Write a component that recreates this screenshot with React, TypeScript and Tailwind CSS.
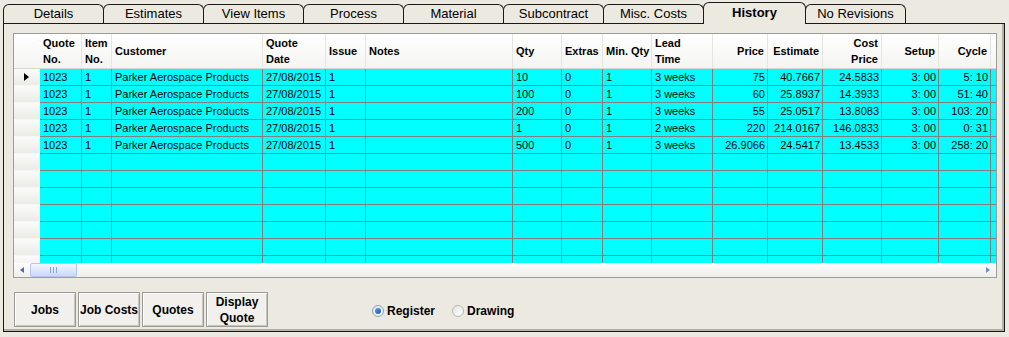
import React from "react";

type Col = { head: string[]; w: string; right?: boolean };

const cols: Col[] = [
  { head: ["Quote", "No."], w: "w-[42px]" },
  { head: ["Item", "No."], w: "w-[30px]" },
  { head: ["Customer"], w: "w-[151px]" },
  { head: ["Quote", "Date"], w: "w-[63px]" },
  { head: ["Issue"], w: "w-[40px]" },
  { head: ["Notes"], w: "w-[147px]" },
  { head: ["Qty"], w: "w-[49px]" },
  { head: ["Extras"], w: "w-[41px]" },
  { head: ["Min. Qty"], w: "w-[49px]" },
  { head: ["Lead", "Time"], w: "w-[61px]" },
  { head: ["Price"], w: "w-[55px]", right: true },
  { head: ["Estimate"], w: "w-[55px]", right: true },
  { head: ["Cost", "Price"], w: "w-[59px]", right: true },
  { head: ["Setup"], w: "w-[57px]", right: true },
  { head: ["Cycle"], w: "w-[52px]", right: true },
];

const base = ["1023", "1", "Parker Aerospace Products", "27/08/2015", "1", ""];
const rows: string[][] = [
  [...base, "10", "0", "1", "3 weeks", "75", "40.7667", "24.5833", "3: 00", "5: 10"],
  [...base, "100", "0", "1", "3 weeks", "60", "25.8937", "14.3933", "3: 00", "51: 40"],
  [...base, "200", "0", "1", "3 weeks", "55", "25.0517", "13.8083", "3: 00", "103: 20"],
  [...base, "1", "0", "1", "2 weeks", "220", "214.0167", "146.0833", "3: 00", "0: 31"],
  [...base, "500", "0", "1", "3 weeks", "26.9066", "24.5417", "13.4533", "3: 00", "258: 20"],
];

const tabs = ["Details", "Estimates", "View Items", "Process", "Material", "Subcontract", "Misc. Costs", "History", "No Revisions"];

function Tabs() {
  return (
    <div className="flex items-end h-[23px] pl-[3px]">
      {tabs.map((t, i) =>
        t === "History" ? (
          <div
            key={t}
            className="relative z-10 -ml-px mb-[-1px] h-[22px] w-[103px] border border-b-0 border-[#1a1a1a] rounded-t-[6px] bg-[#ece9e0] flex items-center justify-center pb-[1px] text-[13px] font-bold text-black"
          >
            {t}
          </div>
        ) : (
          <div
            key={t}
            className={`${i === 0 ? "" : "-ml-px"} h-[19px] w-[101px] border border-b-0 border-[#1a1a1a] rounded-t-[6px] bg-[#ece9e0] flex items-center justify-center text-[13px] text-black`}
          >
            {t}
          </div>
        )
      )}
    </div>
  );
}

function GridHeader() {
  return (
    <div className="flex h-[35px] bg-gradient-to-b from-white to-[#f4f4f2] border-b border-[#d6d6d2]">
      <div className="w-[26px]" />
      {cols.map((c) => (
        <div
          key={c.head.join(" ")}
          className={`${c.w} shrink-0 border-r border-[#e4e4e0] flex flex-col justify-center text-[11px] font-bold leading-[16px] text-black ${
            c.right ? "items-end pr-[3px]" : "items-start pl-[3px]"
          }`}
        >
          {c.head.map((h) => (
            <span key={h} className="whitespace-nowrap">
              {h}
            </span>
          ))}
        </div>
      ))}
      <div className="flex-1" />
    </div>
  );
}

function GridRow({ cells, current }: { cells?: string[]; current?: boolean }) {
  return (
    <div className="flex h-[17px] shrink-0">
      <div className="w-[26px] shrink-0 flex items-center bg-gradient-to-b from-[#fbfbfa] to-[#ebebe7] border-b border-[#f7f7f5]">
        {current && (
          <span className="ml-[10px] w-0 h-0 border-y-[4px] border-y-transparent border-l-[5px] border-l-black" />
        )}
      </div>
      {cols.map((c, i) => (
        <div
          key={i}
          className={`${c.w} shrink-0 bg-[#00ffff] border-r border-b border-[#808080] flex items-center text-[11px] text-black whitespace-nowrap overflow-hidden ${
            c.right ? "justify-end pr-[2px]" : "pl-[3px]"
          }`}
        >
          {cells ? cells[i] : ""}
        </div>
      ))}
      <div className="flex-1 bg-[#00ffff] border-b border-[#808080]" />
    </div>
  );
}

function ScrollBar() {
  return (
    <div className="h-[14px] flex items-center bg-gradient-to-b from-[#fdfdfc] to-[#eeeeea]">
      <span className="ml-[6px] w-0 h-0 border-y-[3px] border-y-transparent border-r-[4px] border-r-[#4a6cae]" />
      <div className="ml-[6px] h-[14px] w-[47px] rounded-[2px] border border-[#b4c7ec] bg-gradient-to-b from-[#f4f7fe] to-[#c9d8f6] flex items-center justify-center gap-[2px]">
        <span className="w-px h-[6px] bg-[#8aa4d6]" />
        <span className="w-px h-[6px] bg-[#8aa4d6]" />
        <span className="w-px h-[6px] bg-[#8aa4d6]" />
      </div>
      <div className="flex-1" />
      <span className="mr-[6px] w-0 h-0 border-y-[3px] border-y-transparent border-l-[4px] border-l-[#6d8fd0]" />
    </div>
  );
}

function Button({ lines }: { lines: string[] }) {
  return (
    <button className="w-[62px] h-[35px] border border-[#9a9a98] bg-[#f1f0ec] shadow-[inset_1px_1px_0_#ffffff,inset_-1px_-1px_0_#c6c5bf] flex flex-col items-center justify-center text-[12px] font-bold leading-[16px] text-black">
      {lines.map((l) => (
        <span key={l} className="whitespace-nowrap">
          {l}
        </span>
      ))}
    </button>
  );
}

function Radio({ label, checked }: { label: string; checked?: boolean }) {
  return (
    <label className="flex items-center gap-[3px] text-[12px] font-bold text-black">
      <span
        className={`w-[12px] h-[12px] rounded-full border flex items-center justify-center bg-gradient-to-br from-[#e4e4e0] to-white ${
          checked ? "border-[#8aa0bd]" : "border-[#b6b6b2]"
        }`}
      >
        {checked && <span className="w-[6px] h-[6px] rounded-full bg-gradient-to-br from-[#5d9bef] to-[#1a55b8]" />}
      </span>
      {label}
    </label>
  );
}

export default function App() {
  const empty = Array.from({ length: 7 });
  return (
    <div className="w-[1009px] h-[337px] overflow-hidden bg-[#ece9e0] font-['Liberation_Sans',Arial,sans-serif]">
      <Tabs />
      <div className="ml-[3px] w-[1002px] h-[309px] border border-[#1a1a1a] shadow-[inset_-2px_-2px_0_#b3b0a6]">
        {/* data grid */}
        <div className="ml-[9px] mt-[9px] w-[984px] border border-[#9d9d9b] bg-white">
          <GridHeader />
          <div className="h-[194px] overflow-hidden flex flex-col">
            {rows.map((r, i) => (
              <GridRow key={i} cells={r} current={i === 0} />
            ))}
            {empty.map((_, i) => (
              <GridRow key={"e" + i} />
            ))}
          </div>
          <ScrollBar />
        </div>

        {/* buttons + radios */}
        <div className="flex items-center ml-[10px] mt-[14px]">
          <div className="flex gap-[2px]">
            <Button lines={["Jobs"]} />
            <Button lines={["Job Costs"]} />
            <Button lines={["Quotes"]} />
            <Button lines={["Display", "Quote"]} />
          </div>
          <div className="flex items-center gap-[17px] ml-[104px] mt-[3px]">
            <Radio label="Register" checked />
            <Radio label="Drawing" />
          </div>
        </div>
      </div>
    </div>
  );
}
